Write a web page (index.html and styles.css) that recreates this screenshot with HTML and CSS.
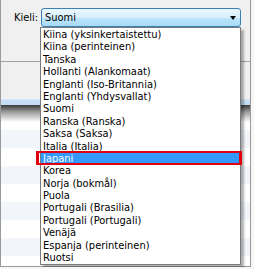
FILE: index.html
```html
<!DOCTYPE html>
<html lang="fi">
<head>
    <meta charset="UTF-8">
    <meta name="viewport" content="width=device-width, initial-scale=1.0">
    <title>Kieli</title>
    <link rel="stylesheet" href="styles.css">
</head>
<body>
    <div class="window">
        <div class="toolbar">
            <label class="field-label">Kieli:</label>
            <div class="combo">
                <span class="combo-value">Suomi</span>
                <span class="combo-arrow"></span>
            </div>
        </div>
        <div class="panel"></div>
        <div class="grid-head"></div>
        <div class="grid-shade"></div>
        <div class="grid-rows">
            <div class="row"></div>
            <div class="row"></div>
            <div class="row"></div>
            <div class="row"></div>
            <div class="row"></div>
            <div class="row"></div>
            <div class="row"></div>
            <div class="row"></div>
        </div>

        <!-- open drop-down list of the combo -->
        <ul class="dropdown">
            <li>Kiina (yksinkertaistettu)</li>
            <li>Kiina (perinteinen)</li>
            <li>Tanska</li>
            <li>Hollanti (Alankomaat)</li>
            <li>Englanti (Iso-Britannia)</li>
            <li>Englanti (Yhdysvallat)</li>
            <li>Suomi</li>
            <li>Ranska (Ranska)</li>
            <li>Saksa (Saksa)</li>
            <li>Italia (Italia)</li>
            <li class="selected">Japani</li>
            <li>Korea</li>
            <li>Norja (bokmål)</li>
            <li>Puola</li>
            <li>Portugali (Brasilia)</li>
            <li>Portugali (Portugali)</li>
            <li>Venäjä</li>
            <li>Espanja (perinteinen)</li>
            <li>Ruotsi</li>
        </ul>
    </div>
</body>
</html>
```

FILE: styles.css
```css
body {
    margin: 0;
    background: #f6f6f6;
    font-family: "DejaVu Sans Condensed", "Liberation Sans", sans-serif;
    font-size: 11px;
    color: #000;
}
.window {
    position: relative;
    box-sizing: border-box;
    width: 251px;
    height: 267px;
    border-left: 1px solid #9a9a9a;
    border-right: 1px solid #9a9a9a;
    border-bottom: 1px solid #9a9a9a;
    background: #fff;
}
.toolbar {
    display: flex;
    align-items: flex-start;
    height: 62px;
    box-sizing: border-box;
    padding: 8px 0 0 13px;
    background: #f0f0f0;
    border-bottom: 1px solid #a3a3a3;
}
.field-label {
    width: 27px;
    line-height: 19px;
}
.combo {
    box-sizing: border-box;
    width: 200px;
    height: 19px;
    display: flex;
    align-items: center;
    justify-content: space-between;
    padding: 0 4px 0 3px;
    border: 1px solid #3c7fb1;
    border-radius: 3px;
    background: linear-gradient(#eaf6fd, #d9f0fc 50%, #bee6fd 50%, #a7d9f5);
}
.combo-arrow {
    width: 0;
    height: 0;
    border-left: 3.5px solid transparent;
    border-right: 3.5px solid transparent;
    border-top: 4px solid #000;
}
.panel {
    height: 37px;
    background: #f0f0f0;
}
.grid-head {
    height: 6px;
    background: #c6ddf6;
    border-top: 1px solid #d9e6f3;
    box-sizing: border-box;
}
.grid-shade {
    height: 17px;
    background: linear-gradient(#3a3a3a, #9a9a9a 40%, #fff);
}
.grid-rows {
    padding-top: 8px;
}
.row {
    height: 18px;
}
.row:nth-child(odd) {
    background: #f2f6fb;
}
.dropdown {
    position: absolute;
    left: 39px;
    top: 27px;
    box-sizing: border-box;
    width: 201px;
    height: 238px;
    margin: 0;
    padding: 1px 0 0;
    list-style: none;
    background: #fff;
    border: 1px solid #7a7a7a;
    box-shadow: 3px 3px 2px rgba(0, 0, 0, 0.3);
}
.dropdown li {
    position: relative;
    height: 12.4px;
    line-height: 12.4px;
    padding-left: 2px;
    white-space: nowrap;
}
.dropdown .selected {
    background: #3399ff;
    color: #fff;
}
/* red marker drawn round the chosen language */
.dropdown .selected::after {
    content: "";
    position: absolute;
    left: -5px;
    right: -2px;
    top: -2px;
    bottom: 0;
    border: 3px solid #e3000e;
    border-top-width: 2px;
    border-bottom-width: 2px;
}
```
